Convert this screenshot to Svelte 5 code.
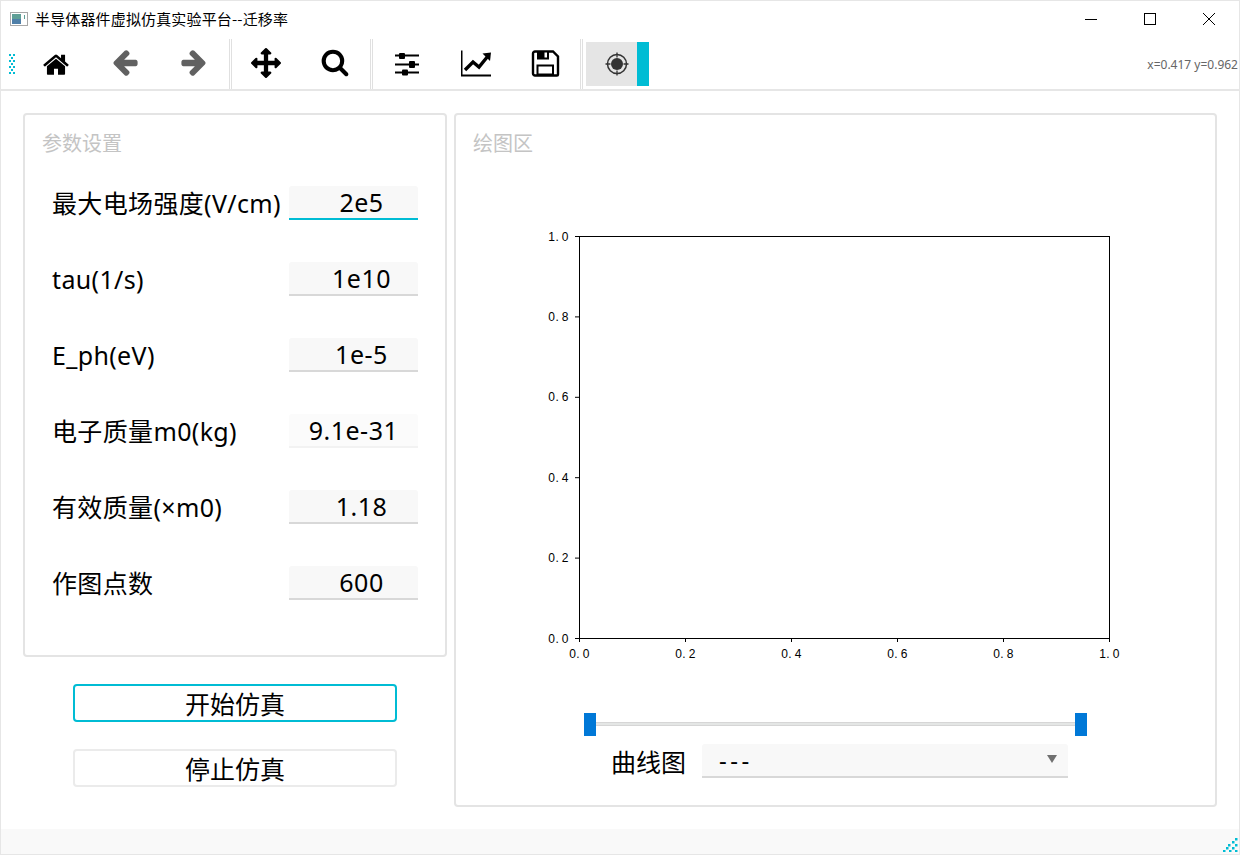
<script>
    // parameter rows on the left panel
    const params = [
        { label: '最大电场强度(V/cm)', value: '2e5', cls: 'focus' },
        { label: 'tau(1/s)', value: '1e10', cls: '' },
        { label: 'E_ph(eV)', value: '1e-5', cls: '' },
        { label: '电子质量m0(kg)', value: '9.1e-31', cls: 'wide' },
        { label: '有效质量(×m0)', value: '1.18', cls: '' },
        { label: '作图点数', value: '600', cls: '' }
    ];

    const ticks = ['0.0', '0.2', '0.4', '0.6', '0.8', '1.0'];
    const plotW = 530;
    const plotH = 402;

    const handleDots = [];
    for (let i = 0; i < 7; i++) {
        if (i % 2 === 0) {
            handleDots.push([0, i * 3], [4, i * 3]);
        } else {
            handleDots.push([2, i * 3]);
        }
    }

    const gripDots = [[12, 0], [9, 3], [5, 6], [12, 6], [3, 9], [9, 9], [0, 12], [6, 12], [12, 12]];
</script>

<div class="window">
    <div class="titlebar">
        <svg class="app-icon" width="18" height="14" viewBox="0 0 18 14">
            <rect x="0.5" y="0.5" width="17" height="13" fill="#fff" stroke="#a8a8a8" />
            <rect x="2" y="2" width="9" height="10" fill="#5f9f96" />
            <rect x="2" y="7" width="9" height="5" fill="#4f7fa8" />
            <rect x="14" y="3" width="1" height="4" fill="#5f9f96" />
        </svg>
        <span class="title">半导体器件虚拟仿真实验平台--迁移率</span>
        <div class="win-controls">
            <svg width="12" height="12" viewBox="0 0 12 12"><path d="M0 6.5h12" stroke="#000" /></svg>
            <svg width="12" height="12" viewBox="0 0 12 12"><rect x="0.5" y="0.5" width="11" height="11" fill="none" stroke="#000" /></svg>
            <svg width="12" height="12" viewBox="0 0 12 12"><path d="M0 0l12 12M12 0L0 12" stroke="#000" /></svg>
        </div>
    </div>

    <div class="toolbar">
        <svg class="handle" width="6" height="20" viewBox="0 0 6 20">
            {#each handleDots as d}
                <rect x={d[0]} y={d[1]} width="2" height="2" fill="#00bcd4" />
            {/each}
        </svg>

        <button class="tool">
            <svg width="30" height="30" viewBox="0 0 1792 1792"><path transform="translate(896 1000) scale(.94) translate(-896 -896)" fill="#000" d="M1472 992v480q0 26-19 45t-45 19h-384v-384h-256v384h-384q-26 0-45-19t-19-45v-480q0-1 .5-3t.5-3l575-474 575 474q1 2 1 6zm223-69l-62 74q-8 9-21 11h-3q-13 0-21-7l-692-577-692 577q-12 8-24 7-13-2-21-11l-62-74q-8-10-7-23.5t11-21.5l719-599q32-26 76-26t76 26l244 204v-195q0-14 9-23t23-9h192q14 0 23 9t9 23v408l219 182q10 8 11 21.5t-7 23.5z" /></svg>
        </button>
        <button class="tool">
            <svg width="30" height="30" viewBox="0 0 1792 1792"><path transform="translate(896 896) scale(.98) translate(-896 -960)" fill="#616161" d="M1664 896v128q0 53-32.5 90.5t-84.5 37.5h-704l293 294q38 36 38 90t-38 90l-75 76q-38 38-90 38-53 0-91-38l-651-652q-37-37-37-90 0-52 37-91l651-650q38-38 91-38 52 0 90 38l75 74q38 38 38 91t-38 91l-293 293h704q52 0 84.5 37.5t32.5 90.5z" /></svg>
        </button>
        <button class="tool">
            <svg width="30" height="30" viewBox="0 0 1792 1792"><path transform="translate(896 896) scale(.98) translate(-896 -960)" fill="#616161" d="M1600 960q0 54-37 91l-651 651q-39 37-91 37-51 0-90-37l-75-75q-38-38-38-91t38-91l293-293h-704q-52 0-84.5-37.5t-32.5-90.5v-128q0-53 32.5-90.5t84.5-37.5h704l-293-294q-38-36-38-90t38-90l75-75q38-38 90-38 53 0 91 38l651 651q37 35 37 90z" /></svg>
        </button>
        <div class="sep"></div>
        <button class="tool">
            <svg width="30" height="30" viewBox="0 0 1792 1792"><path fill="#000" d="M1792 896q0 26-19 45l-256 256q-19 19-45 19t-45-19-19-45v-128h-384v384h128q26 0 45 19t19 45-19 45l-256 256q-19 19-45 19t-45-19l-256-256q-19-19-19-45t19-45 45-19h128v-384h-384v128q0 26-19 45t-45 19-45-19l-256-256q-19-19-19-45t19-45l256-256q19-19 45-19t45 19 19 45v128h384v-384h-128q-26 0-45-19t-19-45 19-45l256-256q19-19 45-19t45 19l256 256q19 19 19 45t-19 45-45 19h-128v384h384v-128q0-26 19-45t45-19 45 19l256 256q19 19 19 45z" /></svg>
        </button>
        <button class="tool">
            <svg width="30" height="30" viewBox="0 0 1792 1792"><path transform="translate(896 896) scale(.96) translate(-896 -960)" fill="#000" d="M1216 832q0-185-131.5-316.5t-316.5-131.5-316.5 131.5-131.5 316.5 131.5 316.5 316.5 131.5 316.5-131.5 131.5-316.5zm512 832q0 52-38 90t-90 38q-54 0-90-38l-343-342q-179 124-399 124-143 0-273.5-55.5t-225-150-150-225-55.5-273.5 55.5-273.5 150-225 225-150 273.5-55.5 273.5 55.5 225 150 150 225 55.5 273.5q0 220-124 399l343 343q37 37 37 90z" /></svg>
        </button>
        <div class="sep"></div>
        <button class="tool">
            <svg width="30" height="30" viewBox="0 0 30 30">
                <path d="M3 7.5h24M3 16.5h24M3 24.5h24" stroke="#000" stroke-width="2" />
                <rect x="7" y="5" width="6" height="6" rx="1" fill="#000" />
                <rect x="17" y="13" width="6" height="7" rx="1" fill="#000" />
                <rect x="10" y="21.5" width="6" height="6" rx="1" fill="#000" />
            </svg>
        </button>
        <button class="tool">
            <svg width="30" height="30" viewBox="0 0 30 30">
                <path d="M0.5 2.5v25h30" fill="none" stroke="#000" stroke-width="2" />
                <path d="M4 22l8-8 6 5 9-11" fill="none" stroke="#000" stroke-width="3.4" />
                <path d="M21.5 5.5l8.5-1-1 8.500z" fill="#000" />
            </svg>
        </button>
        <button class="tool">
            <svg width="30" height="30" viewBox="0 0 30 30">
                <path d="M5 3.5h18l5 5v18a1 1 0 0 1-1 1H5a2 2 0 0 1-2-2V5.500a2 2 0 0 1 2-2z" fill="none" stroke="#000" stroke-width="2.400" />
                <rect x="7" y="3" width="12" height="8.500" fill="#000" />
                <rect x="14.500" y="4.500" width="2.500" height="5" fill="#fff" />
                <rect x="7.500" y="17.500" width="15.500" height="9" fill="none" stroke="#000" stroke-width="2" />
            </svg>
        </button>
        <div class="sep"></div>
        <button class="tool checked">
            <svg width="30" height="30" viewBox="0 0 30 30">
                <circle cx="15" cy="15" r="9.500" fill="none" stroke="#333" stroke-width="1.500" />
                <circle cx="15" cy="15" r="6" fill="#333" />
                <path d="M15 3.500v5M15 21.500v5M3.500 15h5M21.500 15h5" stroke="#333" stroke-width="1.300" />
            </svg>
        </button>
        <div class="tool-marker"></div>
        <span class="coords">x=0.417 y=0.962</span>
    </div>

    <div class="main">
        <div class="left">
            <div class="panel params">
                <div class="panel-title">参数设置</div>
                {#each params as p}
                    <div class="row">
                        <span class="label">{p.label}</span>
                        <div class="field {p.cls}">{p.value}</div>
                    </div>
                {/each}
            </div>
            <button class="action primary">开始仿真</button>
            <button class="action">停止仿真</button>
        </div>

        <div class="panel plot-panel">
            <div class="panel-title">绘图区</div>
            <svg class="plot" width="620" height="440" viewBox="-50 -10 620 440">
                <rect x="0.5" y="0.5" width={plotW} height={plotH} fill="#fff" stroke="#000" />
                {#each ticks as t, i}
                    <path d="M{0.5 + (plotW * i) / 5} {plotH}v4" stroke="#000" />
                    <text class="tick" x={0.5 + (plotW * i) / 5} y={plotH + 20} text-anchor="middle">{t.slice(0, 2)}<tspan dx="2.5">{t[2]}</tspan></text>
                    <path d="M0 {0.5 + plotH - (plotH * i) / 5}h-4" stroke="#000" />
                    <text class="tick" x="-10" y={plotH - (plotH * i) / 5 + 4.500} text-anchor="end">{t.slice(0, 2)}<tspan dx="2.5">{t[2]}</tspan></text>
                {/each}
            </svg>
            <div class="slider">
                <div class="groove"></div>
                <div class="knob"></div>
                <div class="knob"></div>
            </div>
            <div class="combo-row">
                <span class="combo-label">曲线图</span>
                <div class="combo">
                    <span class="combo-value">---</span>
                    <span class="arrow"></span>
                </div>
            </div>
        </div>
    </div>

    <div class="statusbar">
        <svg width="15" height="14" viewBox="0 0 15 14">
            {#each gripDots as d}
                <rect x={d[0]} y={d[1]} width="2.500" height="2.500" fill="#00bcd4" />
            {/each}
        </svg>
    </div>
</div>

<style>
    :global(body) {
        margin: 0;
        background: #fff;
    }

    .window {
        box-sizing: border-box;
        width: 1240px;
        height: 855px;
        border: 1px solid #e6e6e6;
        display: flex;
        flex-direction: column;
        font-family: "Noto Sans", "Noto Sans CJK SC", sans-serif;
        color: #000;
        background: #fff;
    }

    .titlebar {
        height: 37px;
        display: flex;
        align-items: center;
        padding: 0 0 0 9px;
        box-sizing: border-box;
        padding-bottom: 1px;
    }

    .app-icon {
        margin-right: 7px;
    }

    .title {
        font-size: 15px;
        letter-spacing: 0.15px;
        font-family: "Noto Sans CJK SC", sans-serif;
        line-height: 20px;
    }

    .win-controls {
        margin-left: auto;
        display: flex;
        gap: 47px;
        padding-right: 24px;
    }

    .toolbar {
        height: 53px;
        box-sizing: border-box;
        border-bottom: 2px solid #e6e6e6;
        display: flex;
        align-items: stretch;
        position: relative;
    }

    .handle {
        align-self: center;
        margin-left: 8px;
        margin-right: 7px;
    }

    .tool {
        width: 69px;
        border: none;
        background: none;
        padding: 0 2px 1px 0;
        margin: 0;
        display: flex;
        align-items: center;
        justify-content: center;
    }

    .sep {
        box-sizing: border-box;
        width: 3px;
        margin: 1px 0 0;
        border-left: 1px solid #e0e0e0;
        border-right: 1px solid #e0e0e0;
    }

    .tool.checked {
        width: 51px;
        margin: 4px 0 3px 3px;
        padding: 0 0 0 10px;
        background: #e5e5e5;
    }

    .tool-marker {
        width: 12px;
        margin: 4px 0 3px;
        background: #00bcd4;
    }

    .coords {
        margin-left: auto;
        margin-right: 1px;
        align-self: center;
        font-size: 12px;
        color: #666;
        padding-top: 1px;
    }

    .main {
        flex: 1;
        display: flex;
        gap: 7px;
        padding: 22px 0 0 22px;
        min-height: 0;
    }

    .left {
        width: 424px;
        display: flex;
        flex-direction: column;
    }

    .panel {
        box-sizing: border-box;
        border: 2px solid #e4e4e4;
        border-radius: 4px;
    }

    .params {
        height: 544px;
        padding: 0 27px 0 27px;
        margin-bottom: 27px;
    }

    .panel-title {
        font-size: 20px;
        color: #c4c4c4;
        line-height: 28px;
        margin: 14px 0 0 17px;
        font-family: "Noto Sans CJK SC", sans-serif;
    }

    .params .panel-title {
        margin-left: -10px;
        margin-bottom: 29px;
    }

    .row {
        height: 76px;
        display: flex;
        align-items: flex-start;
        justify-content: space-between;
    }

    .label {
        font-size: 25px;
        letter-spacing: 0.35px;
        line-height: 34px;
        white-space: nowrap;
    }

    .field {
        box-sizing: border-box;
        width: 129px;
        height: 34px;
        margin-top: 0;
        padding-left: 16px;
        background: #f8f8f8;
        border-bottom: 2px solid #d8d8d8;
        border-radius: 3px 3px 0 0;
        font-size: 25px;
        letter-spacing: 0.5px;
        line-height: 33px;
        text-align: center;
    }

    .field.focus {
        border-bottom-color: #00bcd4;
    }

    .field.wide {
        padding-left: 0;
        background: #fbfbfb;
        border-bottom-color: #f2f2f2;
    }

    .action {
        box-sizing: border-box;
        width: 324px;
        height: 38px;
        margin: 0 0 27px 50px;
        padding: 0;
        background: #fff;
        border: 2px solid #ebebeb;
        border-radius: 4px;
        font-family: "Noto Sans CJK SC", sans-serif;
        font-size: 25px;
        line-height: 34px;
        color: #000;
    }

    .action.primary {
        border-color: #00bcd4;
    }

    .plot-panel {
        width: 763px;
        height: 694px;
        display: flex;
        flex-direction: column;
    }

    .plot {
        display: block;
        margin: 69px 0 0 73px;
        flex: none;
    }

    .tick {
        font-family: "Liberation Sans", sans-serif;
        font-size: 12px;
        letter-spacing: 0.5px;
        fill: #000;
    }

    .slider {
        width: 503px;
        height: 23px;
        margin: 47px 0 0 128px;
        display: flex;
        justify-content: space-between;
        position: relative;
    }

    .groove {
        position: absolute;
        left: 0;
        right: 0;
        top: 9px;
        height: 4px;
        box-sizing: border-box;
        background: #e4e6e5;
        border-top: 1px solid #d6d6d6;
        border-bottom: 1px solid #d6d6d6;
    }

    .knob {
        width: 12px;
        height: 23px;
        background: #0078d7;
        position: relative;
    }

    .combo-row {
        display: flex;
        align-items: center;
        margin: 8px 0 0 155px;
        gap: 16px;
    }

    .combo-label {
        font-family: "Noto Sans CJK SC", sans-serif;
        font-size: 25px;
        line-height: 34px;
    }

    .combo {
        box-sizing: border-box;
        width: 366px;
        height: 34px;
        background: #f8f8f8;
        border-bottom: 2px solid #d8d8d8;
        border-radius: 3px 3px 0 0;
        padding: 0 11px 0 17px;
        font-size: 24px;
        line-height: 34px;
        display: flex;
        justify-content: space-between;
        align-items: center;
    }

    .combo-value {
        letter-spacing: 3.5px;
    }

    .arrow {
        width: 0;
        height: 0;
        border-left: 5px solid transparent;
        border-right: 5px solid transparent;
        border-top: 8px solid #707070;
        margin-bottom: 3px;
    }

    .statusbar {
        height: 25px;
        box-sizing: border-box;
        background: #f9f9f9;
        display: flex;
        justify-content: flex-end;
        align-items: flex-end;
        padding: 0 1px 2px 0;
    }
</style>
